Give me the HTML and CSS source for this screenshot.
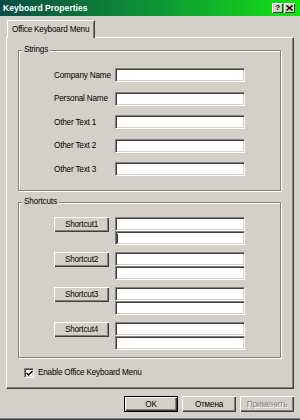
FILE: index.html
```html
<!DOCTYPE html>
<html lang="en">
<head>
    <meta charset="UTF-8">
    <title>Keyboard Properties</title>
    <link rel="stylesheet" href="styles.css">
</head>
<body>
    <div class="window">
        <div class="titlebar">
            <span class="title">Keyboard Properties</span>
            <div class="caption-buttons">
                <span class="cap-btn">?</span>
                <span class="cap-btn">
                    <svg width="7" height="6" viewBox="0 0 7 6"><path d="M0.5 0.5 L6.5 5.5 M6.5 0.5 L0.5 5.5" stroke="#000" stroke-width="1.4" fill="none"/></svg>
                </span>
            </div>
        </div>

        <div class="dialog">
            <div class="tabs">
                <div class="tab active">Office Keyboard Menu</div>
            </div>

            <div class="panel">
                <div class="group strings">
                    <div class="group-title">Strings</div>
                    <div class="fields">
                        <label for="companyName">Company Name</label>
                        <input type="text" id="companyName" class="edit">
                        <label for="personalName">Personal Name</label>
                        <input type="text" id="personalName" class="edit">
                        <label for="otherText1">Other Text 1</label>
                        <input type="text" id="otherText1" class="edit">
                        <label for="otherText2">Other Text 2</label>
                        <input type="text" id="otherText2" class="edit">
                        <label for="otherText3">Other Text 3</label>
                        <input type="text" id="otherText3" class="edit">
                    </div>
                </div>

                <div class="group shortcuts">
                    <div class="group-title">Shortcuts</div>
                    <div class="shortcut-list">
                        <div class="shortcut-row">
                            <button type="button" class="btn">Shortcut1</button>
                            <div class="edit-pair">
                                <input type="text" class="edit">
                                <input type="text" class="edit">
                                <span class="caret"></span>
                            </div>
                        </div>
                        <div class="shortcut-row">
                            <button type="button" class="btn">Shortcut2</button>
                            <div class="edit-pair">
                                <input type="text" class="edit">
                                <input type="text" class="edit">
                            </div>
                        </div>
                        <div class="shortcut-row">
                            <button type="button" class="btn">Shortcut3</button>
                            <div class="edit-pair">
                                <input type="text" class="edit">
                                <input type="text" class="edit">
                            </div>
                        </div>
                        <div class="shortcut-row">
                            <button type="button" class="btn">Shortcut4</button>
                            <div class="edit-pair">
                                <input type="text" class="edit">
                                <input type="text" class="edit">
                            </div>
                        </div>
                    </div>
                </div>

                <div class="check-row">
                    <span class="checkbox">
                        <svg width="7" height="7" viewBox="0 0 7 7"><path d="M0.5 3 L2.5 5 L6.5 1" stroke="#000" stroke-width="1.5" fill="none"/></svg>
                    </span>
                    <span>Enable Office Keyboard Menu</span>
                </div>
            </div>

            <div class="dialog-buttons">
                <button type="button" class="btn default">OK</button>
                <button type="button" class="btn">Отмена</button>
                <button type="button" class="btn" disabled>Применить</button>
            </div>
        </div>
    </div>
</body>
</html>
```

FILE: styles.css
```css
body {
    margin: 0;
    font-family: "Liberation Sans", Arial, sans-serif;
    font-size: 8.2px;
    letter-spacing: -0.2px;
    color: #000;
    white-space: nowrap;
}
.window {
    width: 300px;
    height: 420px;
    box-sizing: border-box;
    background-color: #d4d0c8;
    border-bottom: 1px solid #404040;
    box-shadow: inset 0 -1px 0 #808080;
}
.titlebar {
    height: 16px;
    display: flex;
    align-items: center;
    justify-content: space-between;
    padding: 0 5px 0 3px;
    background: linear-gradient(to right, #0a4c44, #0e9a34 55%, #14e414);
}
.title {
    font-weight: bold;
    font-size: 8.6px;
    letter-spacing: 0;
    color: #fff;
}
.caption-buttons {
    display: flex;
    gap: 1px;
}
.cap-btn {
    width: 11px;
    height: 10px;
    box-sizing: border-box;
    display: flex;
    align-items: center;
    justify-content: center;
    background-color: #d4d0c8;
    box-shadow: inset 1px 1px 0 #fff, inset -1px -1px 0 #404040;
    font-weight: bold;
    font-size: 8px;
    line-height: 8px;
}
.dialog {
    padding: 4px 6px 0 6px;
}
.tabs {
    display: flex;
    height: 17px;
}
.tab {
    position: relative;
    z-index: 1;
    margin-left: 1px;
    width: 88px;
    height: 18px;
    box-sizing: border-box;
    padding-left: 4px;
    display: flex;
    align-items: center;
    background-color: #d4d0c8;
    border-top: 1px solid #fff;
    border-left: 1px solid #fff;
    border-right: 1px solid #404040;
    box-shadow: inset -1px 0 0 #808080;
    border-top-left-radius: 2px;
}
.panel {
    height: 352px;
    box-sizing: border-box;
    padding: 12px 0 0 11px;
    border-top: 1px solid #fff;
    border-left: 1px solid #fff;
    border-right: 1px solid #404040;
    border-bottom: 1px solid #404040;
    box-shadow: inset -1px -1px 0 #808080;
}
.group {
    width: 263px;
    box-sizing: border-box;
    border: 1px solid #808080;
    box-shadow: inset 1px 1px 0 #fff, 1px 1px 0 #fff;
    padding-left: 35px;
}
.group-title {
    width: fit-content;
    margin: -6px 0 0 -32px;
    padding: 0 2px;
    line-height: 10px;
    background-color: #d4d0c8;
}
.strings {
    height: 141px;
}
.shortcuts {
    height: 156px;
    margin-top: 11px;
}
.fields {
    margin-top: 13px;
    display: grid;
    grid-template-columns: 61px 130px;
    row-gap: 9.5px;
    align-items: center;
}
.edit {
    display: block;
    width: 130px;
    height: 14px;
    margin: 0;
    padding: 0;
    box-sizing: border-box;
    border-top: 1px solid #808080;
    border-left: 1px solid #808080;
    border-right: 1px solid #fff;
    border-bottom: 1px solid #fff;
    box-shadow: inset 1px 1px 0 #404040, inset -1px -1px 0 #d4d0c8;
    background-color: #fff;
    outline: none;
}
.shortcut-list {
    margin-top: 10px;
    display: flex;
    flex-direction: column;
    gap: 7px;
}
.shortcut-row {
    display: flex;
    align-items: flex-start;
    gap: 6px;
}
.edit-pair {
    position: relative;
}
.caret {
    position: absolute;
    left: 2px;
    top: 17px;
    width: 1px;
    height: 9px;
    background-color: #404040;
}
.btn {
    width: 55px;
    height: 15px;
    margin: 0;
    padding: 0;
    box-sizing: border-box;
    font-family: inherit;
    font-size: inherit;
    letter-spacing: inherit;
    color: #000;
    background-color: #d4d0c8;
    border: none;
    box-shadow: inset 1px 1px 0 #fff, inset -1px -1px 0 #404040, inset -2px -2px 0 #808080;
}
.btn.default {
    border: 1px solid #000;
}
.btn:disabled {
    color: #808080;
    text-shadow: 1px 1px 0 #fff;
}
.check-row {
    margin: 10px 0 0 6px;
    display: flex;
    align-items: center;
    gap: 4px;
    line-height: 10px;
}
.checkbox {
    width: 10px;
    height: 10px;
    box-sizing: border-box;
    display: flex;
    align-items: center;
    justify-content: center;
    background-color: #fff;
    border-top: 1px solid #808080;
    border-left: 1px solid #808080;
    border-right: 1px solid #fff;
    border-bottom: 1px solid #fff;
    box-shadow: inset 1px 1px 0 #404040, inset -1px -1px 0 #d4d0c8;
}
.dialog-buttons {
    margin-top: 7px;
    display: flex;
    justify-content: flex-end;
    gap: 4px;
}
.dialog-buttons .btn {
    width: 54px;
    height: 16px;
}
```
